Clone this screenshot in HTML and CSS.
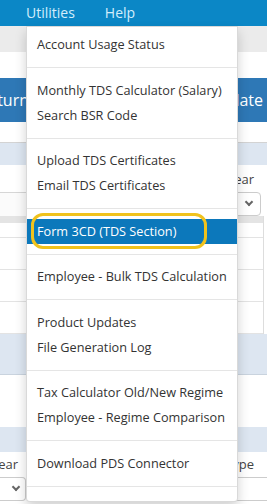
FILE: index.html
```html
<!DOCTYPE html>
<html lang="en">
<head>
    <meta charset="UTF-8">
    <meta name="viewport" content="width=device-width, initial-scale=1.0">
    <title>Utilities Menu</title>
    <link rel="stylesheet" href="styles.css">
</head>
<body>
    <div class="page">
        <div class="topbar">
            <div class="nav-item open">Utilities
                <ul class="dropdown">
                    <li><a href="#">Account Usage Status</a></li>
                    <li class="divider"></li>
                    <li><a href="#">Monthly TDS Calculator (Salary)</a></li>
                    <li><a href="#">Search BSR Code</a></li>
                    <li class="divider"></li>
                    <li><a href="#">Upload TDS Certificates</a></li>
                    <li><a href="#">Email TDS Certificates</a></li>
                    <li class="divider"></li>
                    <li class="active"><a href="#">Form 3CD (TDS Section)</a><span class="marker"></span></li>
                    <li class="divider"></li>
                    <li><a href="#">Employee - Bulk TDS Calculation</a></li>
                    <li class="divider"></li>
                    <li><a href="#">Product Updates</a></li>
                    <li><a href="#">File Generation Log</a></li>
                    <li class="divider"></li>
                    <li><a href="#">Tax Calculator Old/New Regime</a></li>
                    <li><a href="#">Employee - Regime Comparison</a></li>
                    <li class="divider"></li>
                    <li><a href="#">Download PDS Connector</a></li>
                    <li class="divider"></li>
                </ul>
            </div>
            <div class="nav-item">Help</div>
        </div>
        <div class="subbar"></div>
        <div class="blank"></div>
        <div class="header">
            <div class="clip-left">File Return</div>
            <div class="clip-right">Update</div>
        </div>
        <div class="blank short"></div>
        <div class="band"></div>
        <div class="filters">
            <div class="col-left">
                <div class="input"></div>
            </div>
            <div class="col-right">
                <span class="label">Year</span>
                <div class="select"><span class="chev"></span></div>
            </div>
        </div>
        <div class="grid">
            <div class="row head"></div>
            <div class="row first"></div>
            <div class="row"></div>
            <div class="row"></div>
            <div class="row"></div>
        </div>
        <div class="band tall"></div>
        <div class="blank mid"></div>
        <div class="band low"></div>
        <div class="bottom">
            <div class="col-left">
                <span class="label end">Year</span>
                <div class="select"><span class="chev"></span></div>
            </div>
            <div class="col-right type">
                <span class="label">Type</span>
                <div class="select"></div>
            </div>
        </div>
    </div>
</body>
</html>
```

FILE: styles.css
```css
* {
    box-sizing: border-box;
}
body {
    margin: 0;
    font-family: "Open Sans", "Noto Sans", sans-serif;
    color: #333;
    background: #fff;
}
.page {
    width: 267px;
    height: 504px;
    overflow: hidden;
    position: relative;
}
.topbar {
    height: 26px;
    background: #0b87c6;
    display: flex;
    padding-left: 26px;
    gap: 30px;
    font-size: 14px;
    line-height: 26px;
    color: #d3eefc;
}
.nav-item.open {
    position: relative;
}
.subbar {
    height: 26px;
    background: #ebebeb;
}
.blank {
    height: 26px;
}
.blank.short {
    height: 21px;
    border-bottom: 1px solid #d3d3d3;
}
.blank.mid {
    height: 52px;
}
.header {
    height: 44px;
    background: #2e78b6;
    color: #fff;
    font-size: 16px;
    display: flex;
    justify-content: space-between;
    align-items: center;
}
.clip-left {
    width: 29px;
    overflow: hidden;
    display: flex;
    justify-content: flex-end;
    white-space: nowrap;
}
.clip-right {
    width: 29px;
    overflow: hidden;
    white-space: nowrap;
    margin-right: 4px;
    direction: rtl;
}
.band {
    height: 22px;
    background: #dde6f1;
}
.band.tall {
    height: 41px;
    border-bottom: 1px solid #c9d3de;
}
.band.low {
    height: 25px;
}
.filters {
    height: 51px;
    display: flex;
    justify-content: space-between;
}
.col-left {
    width: 26px;
    padding-top: 27px;
}
.input {
    height: 24px;
    border-top: 1px solid #d6d6d6;
    background: #fbfbfb;
}
.col-right {
    width: 34px;
    margin-right: 6px;
    padding-top: 5px;
}
.label {
    display: block;
    font-size: 13px;
    color: #444;
    white-space: nowrap;
    height: 22px;
}
.label.end {
    direction: rtl;
    overflow: hidden;
    padding-right: 8px;
}
.select {
    height: 24px;
    border: 1px solid #ccc;
    border-radius: 4px;
    background: #fff;
    position: relative;
}
.chev {
    position: absolute;
    right: 8px;
    top: 6px;
    width: 6px;
    height: 6px;
    border-right: 2px solid #666;
    border-bottom: 2px solid #666;
    transform: rotate(45deg);
}
.grid {
    border-right: 1px solid #ddd;
    margin-right: 3px;
}
.row {
    height: 32px;
    border-bottom: 1px solid #e3e3e3;
}
.row.first {
    height: 15px;
}
.row.head {
    height: 7px;
    background: #e4e4e4;
    border-bottom: none;
}
.bottom {
    display: flex;
    justify-content: space-between;
    padding-top: 3px;
}
.bottom .col-left {
    width: 26px;
    padding-top: 0;
}
.bottom .col-right.type {
    width: 42px;
    margin-right: 0;
    padding-top: 0;
}
.bottom .select {
    border-right: none;
    border-radius: 4px 0 0 4px;
}
.bottom .col-left .select {
    border-left: none;
    border-right: 1px solid #ccc;
    border-radius: 0 4px 4px 0;
}
.bottom .col-left .chev {
    right: 6px;
}
.dropdown {
    position: absolute;
    top: 26px;
    left: 0;
    width: 212px;
    margin: 0;
    padding: 5px 0;
    list-style: none;
    background: #fff;
    border: 1px solid rgba(0, 0, 0, 0.15);
    border-radius: 0 0 4px 4px;
    box-shadow: 0 6px 12px rgba(0, 0, 0, 0.18);
    z-index: 10;
}
.dropdown li a {
    display: block;
    height: 25px;
    line-height: 25px;
    padding-left: 10px;
    font-size: 12.7px;
    color: #333;
    text-decoration: none;
    white-space: nowrap;
}
.dropdown li.divider {
    height: 1px;
    margin: 10px 0 9.5px;
    background: #e5e5e5;
}
.dropdown li.active {
    position: relative;
}
.dropdown li.active a {
    background: #0c78bb;
    color: #fff;
}
.marker {
    position: absolute;
    left: 4px;
    top: -6px;
    width: 176px;
    height: 36px;
    border: 3px solid #f0c21c;
    border-radius: 12px;
}
```
